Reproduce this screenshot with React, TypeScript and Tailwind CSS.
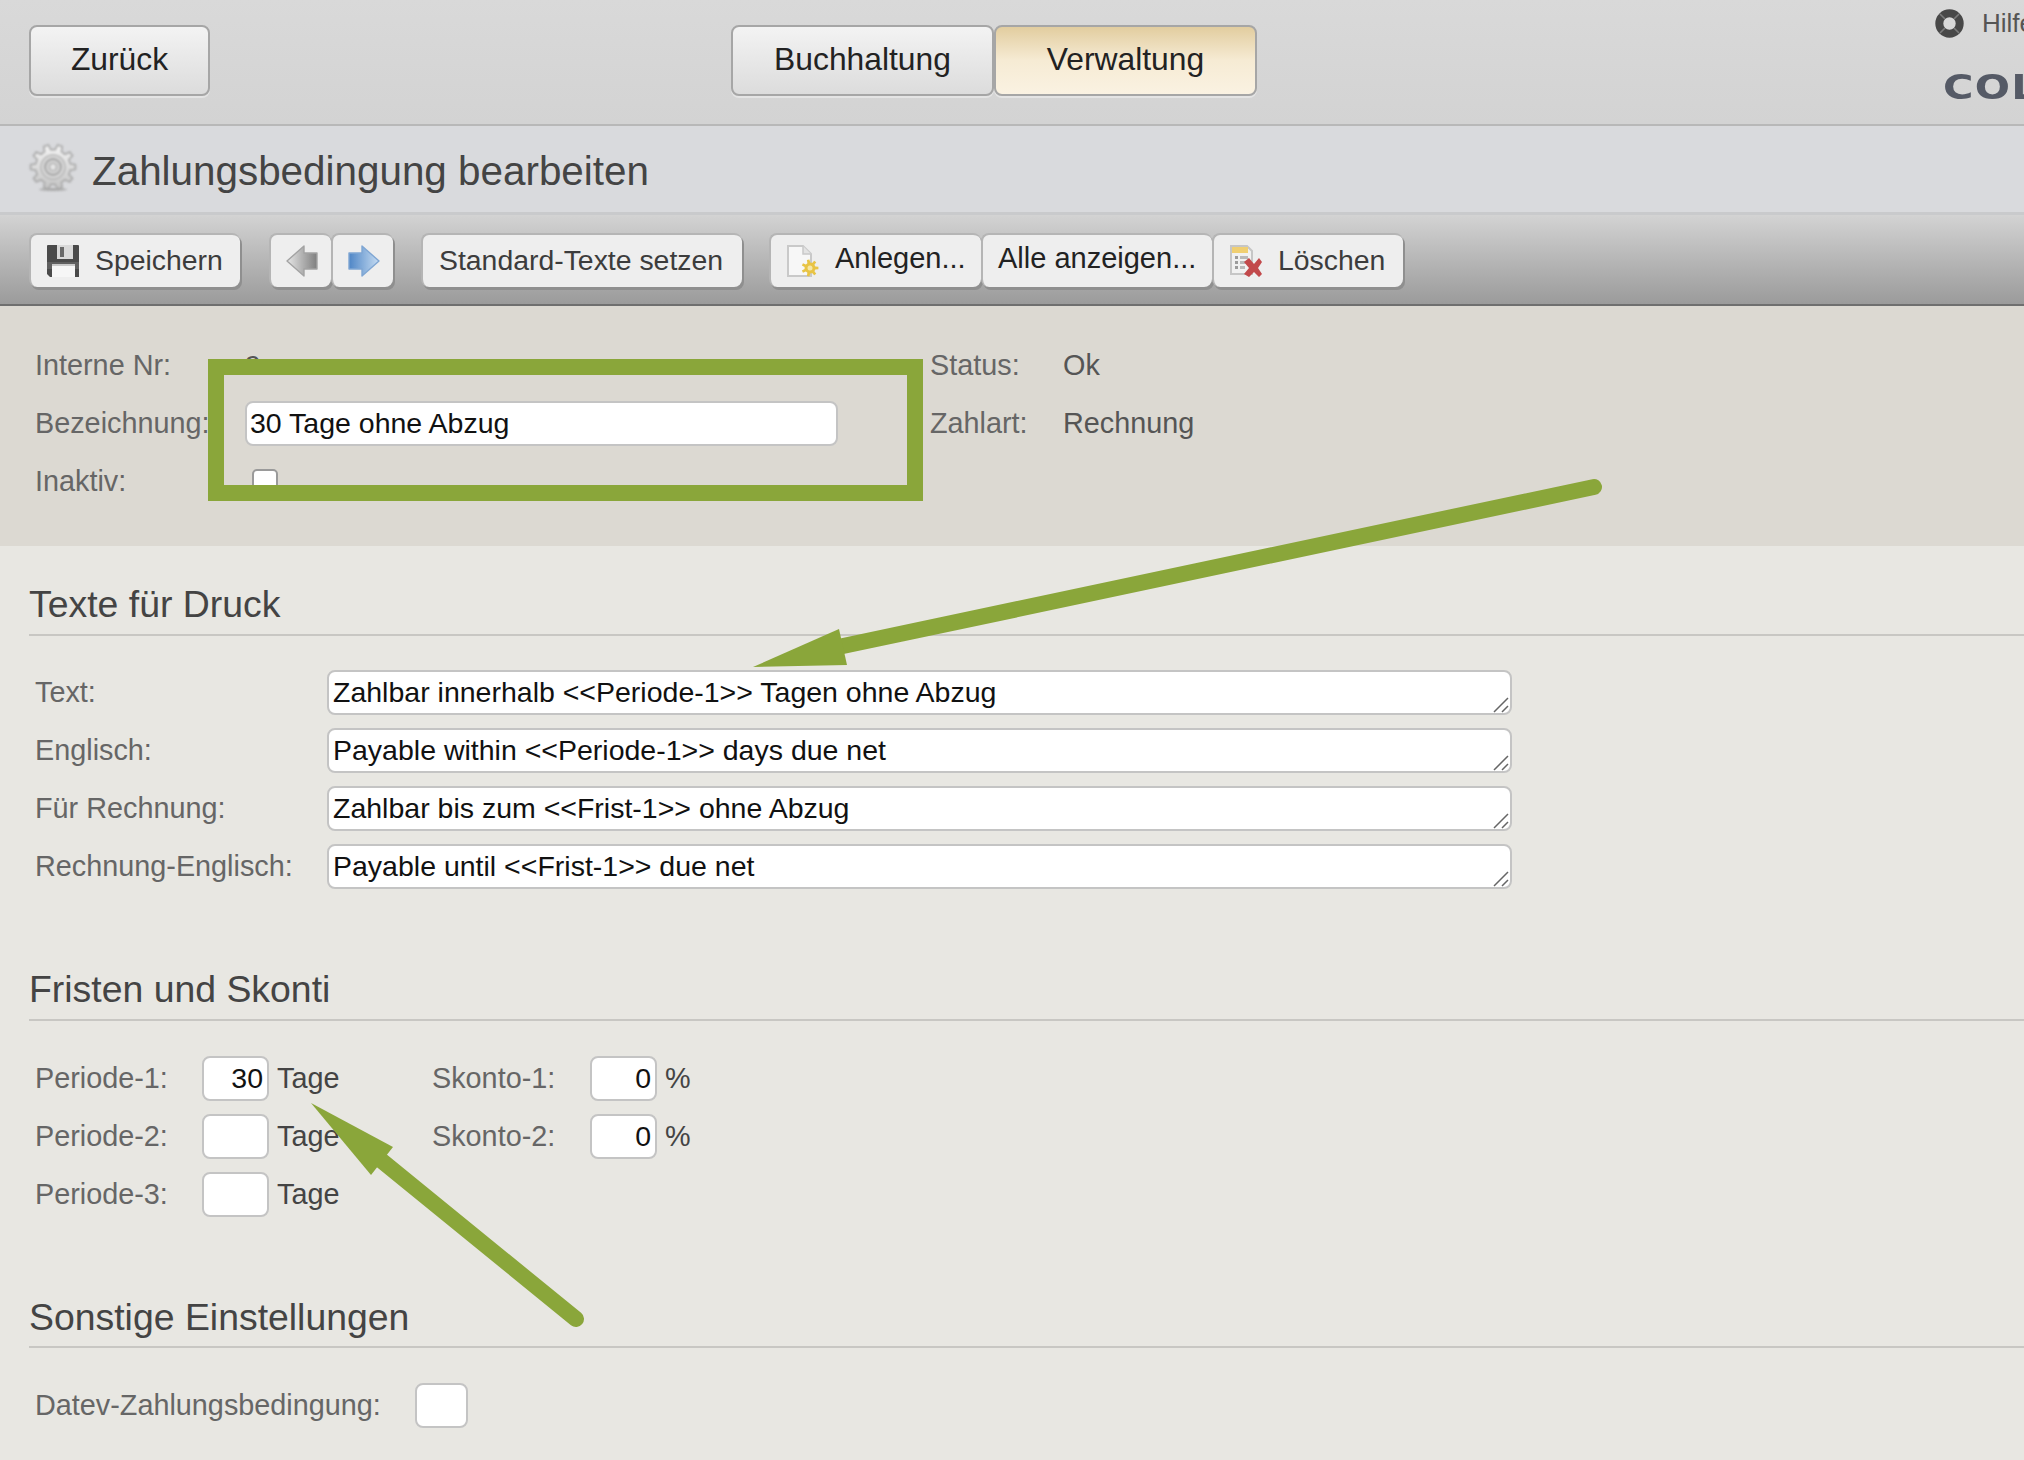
import React from "react";

function gearPath(cx: number, cy: number, ro: number, ri: number, n: number) {
  const pts: string[] = [];
  for (let i = 0; i < n; i++) {
    const a = (i / n) * Math.PI * 2;
    const s = (Math.PI * 2) / n;
    const p = (r: number, t: number) =>
      `${(cx + r * Math.cos(t)).toFixed(2)} ${(cy + r * Math.sin(t)).toFixed(2)}`;
    pts.push(`${i === 0 ? "M" : "L"}${p(ri, a - s * 0.3)}`);
    pts.push(`L${p(ro, a - s * 0.17)}`);
    pts.push(`L${p(ro, a + s * 0.17)}`);
    pts.push(`L${p(ri, a + s * 0.3)}`);
  }
  return pts.join(" ") + "Z";
}

function GearIcon() {
  return (
    <svg width="48" height="48" viewBox="0 0 48 48" className="shrink-0 blur-[0.9px]">
      <defs>
        <linearGradient id="gearg" x1="0" y1="0" x2="0" y2="1">
          <stop offset="0" stopColor="#f4f4f4" />
          <stop offset="1" stopColor="#c4c4c4" />
        </linearGradient>
      </defs>
      <ellipse cx="24" cy="45.5" rx="14" ry="1.5" fill="#a9a9a9" />
      <path d={gearPath(24, 23, 22.5, 17.5, 10)} fill="url(#gearg)" stroke="#a8a8a8" strokeWidth="1.6" />
      <circle cx="24" cy="23" r="12" fill="#dadada" stroke="#b5b5b5" strokeWidth="1.5" />
      <circle cx="24" cy="23" r="8" fill="#d2d2d2" stroke="#a3a3a3" strokeWidth="1.8" />
      <circle cx="24" cy="23" r="3.5" fill="#e6e6e6" stroke="#ababab" strokeWidth="1.2" />
    </svg>
  );
}

function SaveIcon() {
  return (
    <svg width="32" height="32" viewBox="0 0 32 32" className="shrink-0 blur-[0.4px]">
      <path d="M1 0H31a1 1 0 0 1 1 1V32H3L0 29V1a1 1 0 0 1 1-1Z" fill="#4a4a4a" />
      <rect x="0" y="17" width="32" height="7" fill="#5f5f5f" />
      <rect x="10" y="0" width="16" height="14" fill="#d9d9d9" />
      <rect x="13" y="2" width="4" height="10" fill="#686868" />
      <rect x="5" y="19" width="23" height="13" fill="#f6f6f6" />
      <rect x="5" y="19" width="23" height="2" fill="#c8c8c8" />
    </svg>
  );
}

function ArrowIcon({ dir }: { dir: "left" | "right" }) {
  const left = dir === "left";
  return (
    <svg width="32" height="32" viewBox="0 0 32 32" className="shrink-0 blur-[0.5px]">
      <defs>
        <linearGradient id="al" x1="0" y1="0" x2="1" y2="0">
          <stop offset="0" stopColor="#e6e6e6" />
          <stop offset="1" stopColor="#7f7f7f" />
        </linearGradient>
        <linearGradient id="ar" x1="0" y1="0" x2="1" y2="0">
          <stop offset="0" stopColor="#4f86c6" />
          <stop offset="1" stopColor="#c6dcf2" />
        </linearGradient>
      </defs>
      {left ? (
        <path d="M1 16L18 1V8H31V24H18V31Z" fill="url(#al)" stroke="#a3a3a3" strokeWidth="1.4" strokeLinejoin="round" />
      ) : (
        <path d="M31 16L14 1V8H1V24H14V31Z" fill="url(#ar)" stroke="#7fa6d3" strokeWidth="1.4" strokeLinejoin="round" />
      )}
    </svg>
  );
}

function NewIcon() {
  return (
    <svg width="32" height="32" viewBox="0 0 32 32" className="shrink-0 blur-[0.5px]">
      <path d="M1 1H16L24 9V31H1Z" fill="#f7f7f7" stroke="#c9c9c9" strokeWidth="2" />
      <path d="M16 1V9H24" fill="#e3e3e3" stroke="#c9c9c9" strokeWidth="1.5" />
      <path d={gearPath(23, 23, 8.5, 5.5, 7)} fill="#e8c445" />
      <circle cx="23" cy="23" r="2.5" fill="#f6e7a5" />
    </svg>
  );
}

function DeleteIcon() {
  return (
    <svg width="32" height="32" viewBox="0 0 32 32" className="shrink-0 blur-[0.5px]">
      <path d="M1 1H17L22 6V29H1Z" fill="#f1f1f1" stroke="#c6c6c6" strokeWidth="2" />
      <rect x="2" y="2" width="16" height="6" fill="#f0cf72" />
      <rect x="5" y="11" width="3" height="3" fill="#9c9c9c" />
      <rect x="10" y="11" width="8" height="3" fill="#b9b9b9" />
      <rect x="5" y="16" width="3" height="3" fill="#9c9c9c" />
      <rect x="10" y="16" width="8" height="3" fill="#b9b9b9" />
      <rect x="5" y="21" width="3" height="3" fill="#9c9c9c" />
      <rect x="10" y="21" width="5" height="3" fill="#b9b9b9" />
      <path d="M14 17L19 13L24 19L29 13L32 17L28 23L32 29L29 32L24 27L19 32L14 29L19 23Z" fill="#c2494b" />
    </svg>
  );
}

function HelpIcon() {
  return (
    <svg width="29" height="29" viewBox="0 0 29 29" className="shrink-0 blur-[0.5px]">
      <circle cx="14.5" cy="14.5" r="10.2" fill="none" stroke="#484848" strokeWidth="8" />
      <path d="M5 5L10 10M24 5L19 10M5 24L10 19M24 24L19 19" stroke="#7c7c7c" strokeWidth="1.6" />
    </svg>
  );
}

function NavButton({ w, active, children }: { w: string; active?: boolean; children: React.ReactNode }) {
  return (
    <div
      className={`${w} h-[71px] shrink-0 flex items-center justify-center rounded-[8px] border-2 border-[#a6a6a6] pb-[2px] text-[31.8px] text-[#222] shadow-[0_2px_0_#e4e4e4] ${
        active ? "bg-gradient-to-b from-[#e2cd9f] via-[#f6ebd4] to-[#faf2e2]" : "bg-gradient-to-b from-[#f3f3f3] to-[#dcdcdc]"
      }`}
    >
      {children}
    </div>
  );
}

function ToolButton({ w, children, dark }: { w: string; children: React.ReactNode; dark?: boolean }) {
  return (
    <div
      className={`${w} h-[54px] shrink-0 flex items-center rounded-[8px] border-t-2 border-l-2 border-[#b5b5b5] bg-[#eeeeee] pb-[2px] text-[28.4px] shadow-[2px_3px_0_#8f8f8f] ${
        dark ? "text-[#222]" : "text-[#3c3c3c]"
      }`}
    >
      {children}
    </div>
  );
}

function SectionHead({ title, className }: { title: string; className: string }) {
  return (
    <div className={`${className} ml-[29px] border-b-2 border-[#c8c7c3] text-[37.4px] leading-[45px] text-[#444]`}>
      {title}
    </div>
  );
}

const inputCls =
  "h-[45px] bg-white border-2 border-[#c4c4c4] rounded-[8px] text-[28.5px] text-[#111] outline-none";

function TextRow({ label, value }: { label: string; value: string }) {
  return (
    <>
      <div className="text-[28.8px] text-[#666] leading-[44px] whitespace-nowrap">{label}</div>
      <div className="relative w-[1185px] h-[45px]">
        <textarea
          rows={1}
          defaultValue={value}
          className={`${inputCls} block w-full px-[4px] py-0 leading-[40px] overflow-hidden resize-none`}
        />
        <svg width="16" height="16" viewBox="0 0 16 16" className="absolute right-[3px] bottom-[2px]">
          <path d="M1 15L15 1M9 15L15 9" stroke="#666" strokeWidth="1.5" />
        </svg>
      </div>
    </>
  );
}

function NumInput({ value }: { value?: string }) {
  return <input defaultValue={value ?? ""} className={`${inputCls} w-[67px] text-right pl-[4px] pr-[4px]`} />;
}

const Label = ({ children }: { children: React.ReactNode }) => (
  <div className="text-[28.8px] text-[#666] leading-[44px] whitespace-nowrap">{children}</div>
);

const TopLabel = ({ children }: { children: React.ReactNode }) => (
  <div className="text-[28.8px] text-[#666] leading-[43px] whitespace-nowrap">{children}</div>
);

const Unit = ({ children }: { children: React.ReactNode }) => (
  <div className="ml-[8px] text-[28.8px] text-[#444] leading-[44px]">{children}</div>
);

export default function App() {
  return (
    <div className="relative w-[2024px] h-[1460px] overflow-hidden bg-[#e8e7e2] font-['Liberation_Sans',Arial,sans-serif]">
      {/* top bar */}
      <header className="h-[126px] border-b-2 border-[#b8b8b8] bg-gradient-to-b from-[#d9d9d9] to-[#d3d3d3] flex pl-[29px] pt-[25px] overflow-hidden">
        <NavButton w="w-[181px]">Zurück</NavButton>
        <div className="ml-[521px] flex shrink-0">
          <NavButton w="w-[263px]">Buchhaltung</NavButton>
          <NavButton w="w-[263px]" active>
            Verwaltung
          </NavButton>
        </div>
        <div className="ml-[678px] -mt-[25px] w-[200px] shrink-0 flex flex-col">
          <div className="flex items-center h-[46px] gap-[18px]">
            <HelpIcon />
            <span className="text-[26px] text-[#555]">Hilfe</span>
          </div>
          <div className="mt-[23px] ml-[8px] h-[36px] leading-[36px] origin-left scale-x-[1.22] font-['DejaVu_Sans',sans-serif] font-bold text-[34px] tracking-[1px] text-[#555a66] whitespace-nowrap blur-[0.5px]">
            COLLMEX
          </div>
        </div>
      </header>

      {/* title band */}
      <div className="h-[89px] border-b-[3px] border-[#c9cacc] bg-[#d9dadd] flex items-center pl-[29px] pb-[2px] gap-[15px]">
        <GearIcon />
        <h1 className="mt-[6px] text-[40.4px] font-normal text-[#444] leading-none">Zahlungsbedingung bearbeiten</h1>
      </div>

      {/* toolbar */}
      <div className="h-[91px] border-b-2 border-[#6f6f6f] bg-gradient-to-b from-[#d3d3d3] to-[#9b9b9b] flex pl-[29px] pt-[18px]">
        <ToolButton w="w-[211px]">
          <span className="ml-[16px] mt-[2px]">
            <SaveIcon />
          </span>
          <span className="ml-[16px]">Speichern</span>
        </ToolButton>
        <div className="ml-[29px] flex">
          <ToolButton w="w-[62px]">
            <span className="ml-[15px] mt-[2px]">
              <ArrowIcon dir="left" />
            </span>
          </ToolButton>
          <ToolButton w="w-[62px]">
            <span className="ml-[15px] mt-[2px]">
              <ArrowIcon dir="right" />
            </span>
          </ToolButton>
        </div>
        <div className="ml-[28px]">
          <ToolButton w="w-[321px]">
            <span className="ml-[16px]">Standard-Texte setzen</span>
          </ToolButton>
        </div>
        <div className="ml-[27px] flex">
          <ToolButton w="w-[212px]" dark>
            <span className="ml-[16px] mt-[2px]">
              <NewIcon />
            </span>
            <span className="ml-[16px] -mt-[2px] text-[29px]">Anlegen...</span>
          </ToolButton>
          <ToolButton w="w-[231px]" dark>
            <span className="ml-[15px] -mt-[2px] text-[29px]">Alle anzeigen...</span>
          </ToolButton>
          <ToolButton w="w-[191px]">
            <span className="ml-[16px] mt-[2px]">
              <DeleteIcon />
            </span>
            <span className="ml-[16px]">Löschen</span>
          </ToolButton>
        </div>
      </div>

      {/* upper form */}
      <div className="h-[240px] bg-[#dcd9d2] pl-[35px] pt-[37px] grid grid-cols-[210px_685px_133px_1fr] grid-rows-[45px_45px_45px] gap-y-[13px] content-start items-center">
        <TopLabel>Interne Nr:</TopLabel>
        <div className="text-[28.5px] text-[#555]">9</div>
        <TopLabel>Status:</TopLabel>
        <div className="text-[28.8px] text-[#555]">Ok</div>
        <TopLabel>Bezeichnung:</TopLabel>
        <input defaultValue="30 Tage ohne Abzug" className={`${inputCls} w-[593px] px-[3px]`} />
        <TopLabel>Zahlart:</TopLabel>
        <div className="text-[28.8px] text-[#555]">Rechnung</div>
        <TopLabel>Inaktiv:</TopLabel>
        <input
          type="checkbox"
          className="appearance-none ml-[7px] w-[26px] h-[26px] bg-white border-2 border-[#9a9a9a] rounded-[5px]"
        />
      </div>

      {/* Texte */}
      <SectionHead title="Texte für Druck" className="mt-[36px] h-[54px]" />
      <div className="mt-[34px] pl-[35px] grid grid-cols-[292px_1185px] auto-rows-[45px] gap-y-[13px]">
        <TextRow label="Text:" value="Zahlbar innerhalb <<Periode-1>> Tagen ohne Abzug" />
        <TextRow label="Englisch:" value="Payable within <<Periode-1>> days due net" />
        <TextRow label="Für Rechnung:" value="Zahlbar bis zum <<Frist-1>> ohne Abzug" />
        <TextRow label="Rechnung-Englisch:" value="Payable until <<Frist-1>> due net" />
      </div>

      {/* Fristen */}
      <SectionHead title="Fristen und Skonti" className="mt-[78px] h-[54px]" />
      <div className="mt-[35px] pl-[35px] grid grid-cols-[167px_67px_163px_158px_67px_1fr] auto-rows-[45px] gap-y-[13px]">
        <Label>Periode-1:</Label>
        <NumInput value="30" />
        <Unit>Tage</Unit>
        <Label>Skonto-1:</Label>
        <NumInput value="0" />
        <Unit>%</Unit>
        <Label>Periode-2:</Label>
        <NumInput />
        <Unit>Tage</Unit>
        <Label>Skonto-2:</Label>
        <NumInput value="0" />
        <Unit>%</Unit>
        <Label>Periode-3:</Label>
        <NumInput />
        <Unit>Tage</Unit>
      </div>

      {/* Sonstige */}
      <SectionHead title="Sonstige Einstellungen" className="mt-[78px] h-[53px]" />
      <div className="mt-[35px] pl-[35px] flex">
        <div className="w-[380px]">
          <Label>Datev-Zahlungsbedingung:</Label>
        </div>
        <input className={`${inputCls} w-[53px]`} />
      </div>

      {/* annotations */}
      <div className="absolute left-[208px] top-[359px] w-[715px] h-[142px] border-[16px] border-[#8aa63a]" />
      <svg width="2024" height="1460" viewBox="0 0 2024 1460" className="absolute left-0 top-0 pointer-events-none">
        <line x1="1594" y1="487" x2="843" y2="646" stroke="#8aa63a" strokeWidth="16" strokeLinecap="round" />
        <polygon points="753,667 839,629 847,665" fill="#8aa63a" />
        <line x1="576" y1="1319" x2="382" y2="1161" stroke="#8aa63a" strokeWidth="16" strokeLinecap="round" />
        <polygon points="311,1103 393,1147 371,1175" fill="#8aa63a" />
      </svg>
    </div>
  );
}
